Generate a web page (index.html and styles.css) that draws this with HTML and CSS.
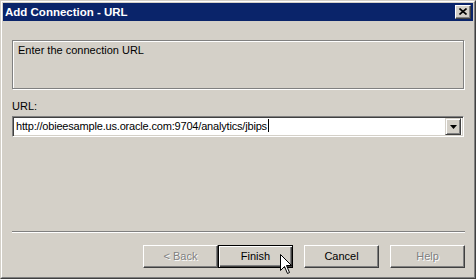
FILE: index.html
```
<html lang="en">
<head>
    <meta charset="UTF-8">
    <title>Add Connection - URL</title>
    <link rel="stylesheet" href="styles.css">
</head>
<body>
    <div class="window">
        <div class="titlebar">
            <span class="title">Add Connection - URL</span>
            <span class="close">
                <svg width="8" height="7" viewBox="0 0 8 7">
                    <path d="M0.5 0.5 L7.5 6.5 M7.5 0.5 L0.5 6.5" stroke="#000" stroke-width="1.6"/>
                </svg>
            </span>
        </div>
        <div class="content">
            <div class="info">Enter the connection URL</div>
            <div class="label">URL:</div>
            <div class="combo">
                <span class="value">http://obieesample.us.oracle.com:9704/analytics/jbips<span class="caret"></span></span>
                <span class="drop">
                    <svg width="7" height="4" viewBox="0 0 7 4"><path d="M0 0 H7 L3.5 4 Z" fill="#000"/></svg>
                </span>
            </div>
            <div class="spacer"></div>
            <div class="separator"></div>
            <div class="buttons">
                <span class="btn disabled">&lt; Back</span>
                <span class="btn default">Finish</span>
                <span class="btn gap">Cancel</span>
                <span class="btn disabled gap">Help</span>
            </div>
        </div>
        <svg class="cursor" width="13" height="21" viewBox="0 0 13 21">
            <path d="M0.5 0.5 L0.5 16.5 L4.5 12.5 L7.5 19.5 L9.5 18.5 L6.5 11.5 L11.5 11.5 Z" fill="#fff" stroke="#000" stroke-width="1"/>
        </svg>
    </div>
</body>
</html>
```
FILE: styles.css
```
body{
    margin: 0;
    background-color: #d4d0c8;
    font-family: "Liberation Sans", Arial, sans-serif;
    font-size: 11px;
    color: #000;
}
.window{
    position: relative;
    width: 476px; height: 279px;
    box-sizing: border-box;
    border: 1px solid;
    border-color: #d4d0c8 #404040 #404040 #d4d0c8;
    display: flex;
    flex-direction: column;
}
.window::before{
    content: "";
    position: absolute;
    left: 0; top: 0; right: 0; bottom: 0;
    border: 1px solid;
    border-color: #fff #808080 #808080 #fff;
    pointer-events: none;
}
.titlebar{
    margin: 2px 2px 0 2px;
    height: 18px;
    background-color: #0a246a;
    display: flex;
    align-items: center;
    padding: 0 2px;
}
.title{
    flex: 1;
    color: #fff;
    font-weight: bold;
    font-size: 11.5px;
}
.close{
    width: 16px; height: 14px;
    box-sizing: border-box;
    background-color: #d4d0c8;
    border: 1px solid;
    border-color: #fff #404040 #404040 #fff;
    box-shadow: inset -1px -1px 0 #808080;
    display: flex;
    align-items: center;
    justify-content: center;
    padding: 0 1px 1px 0;
}
.close svg{ display: block; }
.content{
    flex: 1;
    display: flex;
    flex-direction: column;
    padding: 19px 10px 10px 11px;
}
.info{
    height: 49px;
    margin-right: 1px;
    box-sizing: border-box;
    border: 1px solid #808080;
    box-shadow: 1px 1px 0 #fff, inset 1px 1px 0 #fff;
    padding: 3px 5px;
}
.label{
    margin-top: 11px;
    height: 16px;
}
.combo{
    height: 21px;
    margin-right: 1px;
    box-sizing: border-box;
    background-color: #fff;
    border: 1px solid;
    border-color: #808080 #fff #fff #808080;
    box-shadow: inset 1px 1px 0 #404040, inset -1px -1px 0 #d4d0c8;
    display: flex;
    align-items: center;
    padding: 2px 2px 2px 3px;
}
.value{
    flex: 1;
    line-height: 15px;
    letter-spacing: -0.18px;
}
.caret{
    display: inline-block;
    width: 1px; height: 13px;
    margin-left: 1px;
    background-color: #000;
    vertical-align: -2px;
}
.drop{
    width: 16px; height: 17px;
    box-sizing: border-box;
    background-color: #d4d0c8;
    border: 1px solid;
    border-color: #d4d0c8 #404040 #404040 #d4d0c8;
    box-shadow: inset 1px 1px 0 #fff, inset -1px -1px 0 #808080;
    display: flex;
    align-items: center;
    justify-content: center;
}
.drop svg{ display: block; }
.spacer{ flex: 1; }
.separator{
    height: 1px;
    background-color: #808080;
    border-bottom: 1px solid #fff;
}
.buttons{
    margin-top: 12px;
    display: flex;
    justify-content: flex-end;
}
.btn{
    width: 75px; height: 23px;
    box-sizing: border-box;
    border: 1px solid;
    border-color: #fff #404040 #404040 #fff;
    box-shadow: inset -1px -1px 0 #808080;
    display: flex;
    align-items: center;
    justify-content: center;
    padding-bottom: 1px;
}
.btn.default{
    border: 1px solid #000;
    box-shadow: inset 1px 1px 0 #fff, inset -1px -1px 0 #404040, inset -2px -2px 0 #808080;
}
.btn.gap{ margin-left: 11px; }
.btn.disabled{
    color: #808080;
    text-shadow: 1px 1px 0 #fff;
}
.cursor{
    position: absolute;
    left: 279px; top: 253px;
}
```
